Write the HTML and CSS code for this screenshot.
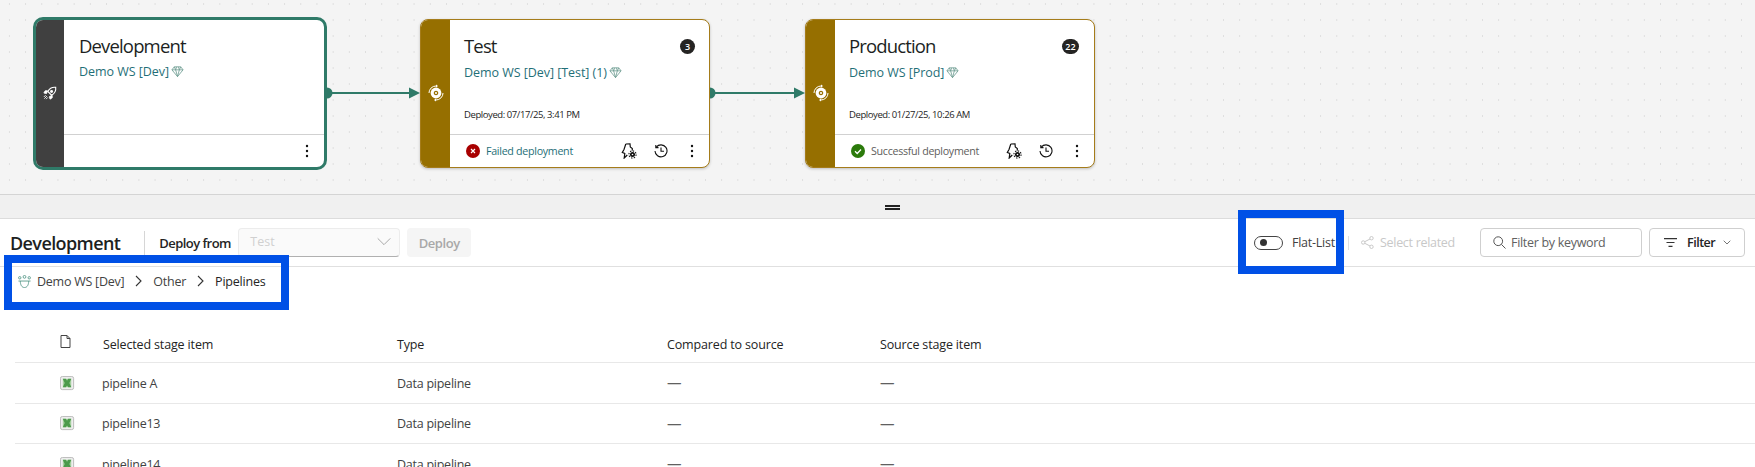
FILE: index.html
```html
<!DOCTYPE html>
<html lang="en">
<head>
<meta charset="utf-8">
<title>Deployment pipeline</title>
<link rel="stylesheet" href="styles.css">
</head>
<body>
<svg class="defs" width="0" height="0" aria-hidden="true">
  <symbol id="gem" viewBox="0 0 14 14"><path d="M3.500 2h7L13 5.200 7 12.500 1 5.200zM1 5.200h12M5 5.200 7 12.500l2-7.300M5 5.200 6 2M9 5.200 8 2M5 5.200 3.500 2M9 5.200l1.500-3.200" fill="none" stroke="#6d9c92" stroke-width=".9"/></symbol>
  <symbol id="cycle" viewBox="0 0 18 18"><circle cx="9" cy="9" r="5.400" fill="#fff"/><circle cx="9" cy="9" r="2.300" fill="#966f00"/><path d="M7.800 7.800l2.400 2.400M10.200 7.800l-2.400 2.400" stroke="#fff" stroke-width=".8"/><path d="M2 9A7 7 0 0 1 9 2M16 9A7 7 0 0 1 9 16" fill="none" stroke="#fff" stroke-width="1"/><path d="M9 .5 11 2 9 3.500zM9 14.500 7 16l2 1.500z" fill="#fff"/></symbol>
  <symbol id="kebab" viewBox="0 0 4 14"><circle cx="2" cy="2" r="1.200"/><circle cx="2" cy="7" r="1.200"/><circle cx="2" cy="12" r="1.200"/></symbol>
  <symbol id="rules" viewBox="0 0 16 16"><path d="M4.800 1 9 .8l.3 3.200L11.300 5.500v2M4.800 1 3 6.500 1.300 9.500 3.800 10.500 3.200 15 6.300 12" fill="none" stroke="#111" stroke-width="1.200"/><circle cx="11.500" cy="11.500" r="2.500" fill="#111"/><circle cx="11.500" cy="11.500" r="3.600" fill="none" stroke="#111" stroke-width="1.100" stroke-dasharray="1.400 1.400"/><circle cx="11.500" cy="11.500" r=".8" fill="#fff"/></symbol>
  <symbol id="history" viewBox="0 0 14 14"><path d="M2.300 3.100A6 6 0 1 1 1 7" fill="none" stroke="#111" stroke-width="1.100"/><path d="M1.800.9v2.700h2.700" fill="none" stroke="#111" stroke-width="1.100"/><path d="M7 3.500V7.300h3" fill="none" stroke="#111" stroke-width="1.100"/></symbol>
  <symbol id="chev" viewBox="0 0 7 12"><path d="M1 1l5 5-5 5" fill="none" stroke="#333" stroke-width="1.100"/></symbol>
  <symbol id="pipe" viewBox="0 0 16 16"><rect x=".5" y=".5" width="14" height="14" rx="2" fill="#eee" stroke="#b9b9b9"/><rect x="3" y="3" width="9" height="9" fill="#a6d0a0"/><path d="M3 3h3.200L7.500 5 8.800 3H12L10 7.500 12 12H8.800L7.500 10 6.200 12H3L5 7.500z" fill="#4b9a4b"/></symbol>
</svg>

<main class="page">
  <section class="canvas">
    <article class="card card-dev">
      <div class="bar bar-dev">
        <svg class="bar-icon" viewBox="0 0 16 16"><path d="M14.500 1.500c-4-.5-7 1.200-9 4.700l4.300 4.300c3.500-2 5.200-5 4.700-9z" fill="none" stroke="#fff" stroke-width="1.300"/><circle cx="9.800" cy="6.200" r="1.700" fill="#fff"/><path d="M5.200 5.500H2.500L1 8l3 .6zM10.500 10.800v2.700L8 15l-.6-3zM4.500 11.500 1.500 14.500M3 10.500l-2 2M5.500 13l-2 2" fill="#fff" stroke="#fff" stroke-width="1"/></svg>
      </div>
      <div class="main">
        <div class="body">
          <h2 class="title">Development</h2>
          <p class="ws"><span>Demo WS [Dev]</span><svg class="gem"><use href="#gem"/></svg></p>
        </div>
        <div class="foot foot-end">
          <svg class="kebab"><use href="#kebab"/></svg>
        </div>
      </div>
    </article>

    <svg class="link link-a" viewBox="0 0 93 14"><path d="M0 1.500a5.500 5.500 0 0 1 0 11z" fill="#2f7a68"/><path d="M4 7h79" stroke="#2f7a68" stroke-width="2"/><path d="M82 1.500 93 7 82 12.500z" fill="#2f7a68"/></svg>

    <article class="card">
      <div class="bar"><svg class="bar-icon"><use href="#cycle"/></svg></div>
      <div class="main">
        <div class="body">
          <div class="head">
            <h2 class="title">Test</h2>
            <span class="badge">3</span>
          </div>
          <p class="ws"><span>Demo WS [Dev] [Test] (1)</span><svg class="gem"><use href="#gem"/></svg></p>
          <p class="deployed">Deployed: 07/17/25, 3:41 PM</p>
        </div>
        <div class="foot">
          <svg class="status" viewBox="0 0 14 14"><circle cx="7" cy="7" r="7" fill="#a80000"/><path d="M5 5l4 4M9 5l-4 4" stroke="#fff" stroke-width="1.200"/></svg>
          <span class="status-text status-fail">Failed deployment</span>
          <svg class="act-rules"><use href="#rules"/></svg>
          <svg class="act-history"><use href="#history"/></svg>
          <svg class="kebab"><use href="#kebab"/></svg>
        </div>
      </div>
    </article>

    <svg class="link link-b" viewBox="0 0 95 14"><path d="M0 1.500a5.500 5.500 0 0 1 0 11z" fill="#2f7a68"/><path d="M4 7h81" stroke="#2f7a68" stroke-width="2"/><path d="M84 1.500 95 7 84 12.500z" fill="#2f7a68"/></svg>

    <article class="card">
      <div class="bar"><svg class="bar-icon"><use href="#cycle"/></svg></div>
      <div class="main">
        <div class="body">
          <div class="head">
            <h2 class="title">Production</h2>
            <span class="badge badge-wide">22</span>
          </div>
          <p class="ws"><span>Demo WS [Prod]</span><svg class="gem"><use href="#gem"/></svg></p>
          <p class="deployed">Deployed: 01/27/25, 10:26 AM</p>
        </div>
        <div class="foot">
          <svg class="status" viewBox="0 0 14 14"><circle cx="7" cy="7" r="7" fill="#2b7a0b"/><path d="M4 7.300l2.200 2.200L10 5.500" fill="none" stroke="#fff" stroke-width="1.300"/></svg>
          <span class="status-text">Successful deployment</span>
          <svg class="act-rules"><use href="#rules"/></svg>
          <svg class="act-history"><use href="#history"/></svg>
          <svg class="kebab"><use href="#kebab"/></svg>
        </div>
      </div>
    </article>
  </section>

  <div class="splitter"><span class="grip"></span></div>

  <section class="toolbar">
    <h1 class="stage">Development</h1>
    <span class="vline"></span>
    <span class="deploy-label">Deploy from</span>
    <div class="select"><span>Test</span><svg class="select-chev" viewBox="0 0 16 10"><path d="M1 1.500l7 7 7-7" fill="none" stroke="#a8a8a8" stroke-width="1.100"/></svg></div>
    <button class="deploy-btn" type="button">Deploy</button>
    <div class="toggle"><span class="knob"></span></div>
    <span class="flat">Flat-List</span>
    <span class="vline vline-b"></span>
    <svg class="share" viewBox="0 0 13 13"><circle cx="10.500" cy="2.200" r="1.700" fill="none" stroke="#c8c8c8"/><circle cx="2.200" cy="6.500" r="1.700" fill="none" stroke="#c8c8c8"/><circle cx="10.500" cy="10.800" r="1.700" fill="none" stroke="#c8c8c8"/><path d="M3.800 5.700 9 3M3.800 7.300 9 10" stroke="#c8c8c8"/></svg>
    <span class="related">Select related</span>
    <div class="search">
      <svg class="search-icon" viewBox="0 0 13 13"><circle cx="5.200" cy="5.200" r="4.400" fill="none" stroke="#555" stroke-width="1"/><path d="M8.400 8.400 12.500 12.500" stroke="#555" stroke-width="1"/></svg>
      <span>Filter by keyword</span>
    </div>
    <button class="filter" type="button">
      <svg class="filter-icon" viewBox="0 0 13 9"><path d="M0 .6h13M2.500 4.500h8M4.500 8.400h4" stroke="#333" stroke-width="1.100"/></svg>
      <span>Filter</span>
      <svg class="filter-chev" viewBox="0 0 8 5"><path d="M.7.7 4 4 7.300.7" fill="none" stroke="#666" stroke-width=".9"/></svg>
    </button>
  </section>

  <nav class="crumbs">
    <svg class="crumb-icon" viewBox="0 0 14 14"><circle cx="7" cy="2" r="1.500" fill="none" stroke="#5c9c8c"/><circle cx="1.900" cy="3" r="1.300" fill="none" stroke="#5c9c8c"/><circle cx="12.100" cy="3" r="1.300" fill="none" stroke="#5c9c8c"/><path d="M.5 6.500h13M2.500 6.500c0 4 1.500 7 4.500 7s4.500-3 4.500-7" fill="none" stroke="#5c9c8c"/></svg>
    <span class="crumb crumb-ws">Demo WS [Dev]</span>
    <svg class="crumb-chev"><use href="#chev"/></svg>
    <span class="crumb">Other</span>
    <svg class="crumb-chev"><use href="#chev"/></svg>
    <span class="crumb crumb-now">Pipelines</span>
  </nav>

  <section class="table">
    <div class="row row-head">
      <svg class="file" viewBox="0 0 11 13"><path d="M1 .5h6l3 3v9H1zM7 .5v3h3" fill="none" stroke="#444" stroke-width="1"/></svg>
      <span class="name-head">Selected stage item</span>
      <span>Type</span>
      <span>Compared to source</span>
      <span>Source stage item</span>
    </div>
    <div class="row">
      <svg class="pipe"><use href="#pipe"/></svg>
      <span>pipeline A</span><span>Data pipeline</span><span class="dash">—</span><span class="dash">—</span>
    </div>
    <div class="row">
      <svg class="pipe"><use href="#pipe"/></svg>
      <span>pipeline13</span><span>Data pipeline</span><span class="dash">—</span><span class="dash">—</span>
    </div>
    <div class="row">
      <svg class="pipe"><use href="#pipe"/></svg>
      <span>pipeline14</span><span>Data pipeline</span><span class="dash">—</span><span class="dash">—</span>
    </div>
  </section>

  <div class="mark mark-crumbs"></div>
  <div class="mark mark-flat"></div>
</main>
</body>
</html>
```

FILE: styles.css
```css
* { box-sizing: border-box; }
html, body { margin: 0; padding: 0; }
body {
  width: 1755px;
  height: 467px;
  overflow: hidden;
  background: #fff;
  color: #242424;
  font-family: "Open Sans", "Noto Sans", "Liberation Sans", sans-serif;
}
.defs { position: absolute; }
.page { position: relative; width: 1755px; height: 467px; overflow: hidden; }
h1, h2, p { margin: 0; font-weight: 400; }
svg { display: block; flex: none; }

/* canvas */
.canvas {
  height: 195px;
  padding-left: 33px;
  padding-bottom: 8px;
  display: flex;
  align-items: center;
  background-color: #f4f4f4;
  background-image: radial-gradient(circle, #dedede .6px, transparent .9px);
  background-size: 16.200px 16px;
  background-position: 1.300px -4px;
  border-bottom: 1px solid #d4d4d4;
}
.card {
  width: 290px;
  height: 149px;
  display: flex;
  background: #fff;
  border: 1px solid #a57c1a;
  border-radius: 8px;
  box-shadow: 0 1px 3px rgba(0,0,0,.22);
  overflow: hidden;
}
.card-dev {
  width: 294px;
  height: 153px;
  border: 3px solid #2f7a68;
  border-radius: 10px;
  box-shadow: none;
}
.bar {
  width: 29px;
  flex: none;
  display: flex;
  align-items: center;
  justify-content: center;
  background: #966f00;
}
.bar-dev { width: 28px; background: #404040; }
.bar-icon { width: 15px; height: 15px; }
.card .bar .bar-icon { width: 18px; height: 18px; }
.card-dev .bar .bar-icon { width: 14px; height: 14px; }
.main { flex: 1; min-width: 0; display: flex; flex-direction: column; }
.body { height: 114px; padding: 13px 14px 0 14px; }
.card-dev .body { padding: 13px 14px 0 15px; }
.head { display: flex; justify-content: space-between; align-items: center; }
.title { font-size: 18.500px; line-height: 26px; letter-spacing: -.85px; color: #201f1e; }
.ws {
  display: flex;
  align-items: center;
  gap: 2px;
  margin-top: 5px;
  font-size: 12.500px;
  line-height: 18px;
  letter-spacing: -.05px;
  color: #1f6f78;
}
.card-dev .ws { margin-top: 4px; }
.deployed { margin-top: 26px; font-size: 9.500px; line-height: 14px; letter-spacing: -.42px; color: #242424; }
.gem { width: 13px; height: 13px; }
.badge {
  width: 15px;
  height: 15px;
  margin-top: 2px;
  border-radius: 50%;
  display: flex;
  align-items: center;
  justify-content: center;
  background: #252423;
  color: #fff;
  font-size: 9px;
  font-weight: 600;
}
.badge-wide { width: 17px; border-radius: 8px; margin-right: 1px; }
.foot {
  flex: 1;
  display: flex;
  align-items: center;
  padding: 0 15px 0 16px;
  border-top: 1px solid #d1d1d1;
}
.foot-end { justify-content: flex-end; }
.kebab { width: 4px; height: 14px; fill: #111; }
.status { width: 14px; height: 14px; margin-right: 6px; }
.status-text { width: 136px; font-size: 10.700px; letter-spacing: -.3px; color: #605e5c; }
.status-fail { color: #1f6f78; }
.act-rules { width: 16px; height: 16px; }
.act-history { width: 14px; height: 14px; margin: 0 22px 0 17px; }

.link { height: 14px; }
.link-a { width: 93px; }
.link-b { width: 95px; }

/* splitter */
.splitter {
  height: 24px;
  display: flex;
  align-items: center;
  justify-content: center;
  padding: 2px 0 0 30px;
  background: #f0f0f0;
  border-bottom: 1px solid #dcdcdc;
}
.grip {
  width: 15px;
  height: 1px;
  box-sizing: content-box;
  border-top: 2px solid #222;
  border-bottom: 2px solid #222;
}

/* toolbar */
.toolbar {
  height: 48px;
  display: flex;
  align-items: center;
  padding: 0 10px 0 10px;
  border-bottom: 1px solid #e0e0e0;
  font-size: 13px;
}
.stage { font-size: 18px; font-weight: 600; color: #201f1e; letter-spacing: -.6px; }
.vline { width: 1px; height: 24px; margin: 0 14px 0 24px; background: #d6d6d6; }
.deploy-label { font-weight: 600; font-size: 13px; letter-spacing: -.55px; width: 79px; }
.select {
  width: 162px;
  height: 29px;
  display: flex;
  align-items: center;
  justify-content: space-between;
  padding: 0 7px 2px 11px;
  background: #fafafa;
  border: 1px solid #ececec;
  border-bottom-color: #b0b0b0;
  border-radius: 4px;
  color: #d0d0d0;
  font-size: 12.500px;
}
.select-chev { width: 16px; height: 9px; }
.deploy-btn {
  width: 64px;
  height: 29px;
  margin-left: 7px;
  margin-right: auto;
  padding: 0;
  border: 0;
  border-radius: 4px;
  background: #f5f5f5;
  color: #a8a8a8;
  font: 600 13px "Open Sans", "Noto Sans", sans-serif;
  letter-spacing: -.4px;
}
.toggle {
  width: 29px;
  height: 14px;
  display: flex;
  align-items: center;
  padding-left: 5px;
  border: 1px solid #444;
  border-radius: 8px;
}
.knob { width: 7px; height: 7px; border-radius: 50%; background: #333; }
.flat { margin-left: 9px; width: 42px; white-space: nowrap; font-size: 12.500px; letter-spacing: -.25px; color: #424242; }
.vline-b { height: 14px; margin: 0 12px 0 14px; background: #e0e0e0; }
.share { width: 13px; height: 13px; }
.related { width: 100px; margin-left: 6px; font-size: 12.500px; letter-spacing: -.3px; color: #c8c8c8; white-space: nowrap; }
.search {
  width: 162px;
  height: 29px;
  display: flex;
  align-items: center;
  gap: 5px;
  padding-left: 12px;
  border: 1px solid #cfcfcf;
  border-radius: 4px;
  font-size: 12.500px;
  letter-spacing: -.3px;
  color: #616161;
  white-space: nowrap;
}
.search-icon { width: 13px; height: 13px; }
.filter {
  width: 96px;
  height: 29px;
  margin-left: 7px;
  display: flex;
  align-items: center;
  padding: 0 0 0 14px;
  border: 1px solid #cfcfcf;
  border-radius: 4px;
  background: #fff;
  color: #242424;
  font: 600 12.500px "Open Sans", "Noto Sans", sans-serif;
  letter-spacing: -.5px;
}
.filter-icon { width: 13px; height: 9px; margin-right: 10px; }
.filter-chev { width: 8px; height: 5px; margin-left: 8px; }

/* breadcrumb */
.crumbs {
  height: 28px;
  padding-left: 18px;
  display: flex;
  align-items: center;
  font-size: 12.500px;
  letter-spacing: -.25px;
  color: #424242;
}
.crumb-icon { width: 13px; height: 13px; margin-right: 6px; }
.crumb-chev { width: 7px; height: 12px; margin: 0 11px 0 11px; }
.crumb-now { font-weight: 500; letter-spacing: -.2px; color: #242424; }

/* table */
.table { margin: 29px 0 0 15px; font-size: 12.500px; letter-spacing: -.25px; color: #424242; }
.row {
  display: grid;
  grid-template-columns: 87px 295px 270px 213px 1fr;
  align-items: center;
  height: 40.500px;
  padding-top: 1px;
  border-bottom: 1px solid #e8e8e8;
}
.row > svg { margin-left: 45px; }
.row-head { height: 39px; padding-top: 2px; color: #242424; font-weight: 500; letter-spacing: -.15px; }
.row-head .file { width: 11px; height: 13px; margin: -6px 0 0 45px; }
.name-head { margin-left: 1px; }
.pipe { width: 15px; height: 15px; }
.dash { font-size: 14.500px; line-height: 18px; color: #606060; }

/* highlight marks */
.mark { position: absolute; border: 8px solid #0050e6; }
.mark-crumbs { left: 4px; top: 255px; width: 285px; height: 55px; }
.mark-flat { left: 1238px; top: 210px; width: 106px; height: 64px; }
```
